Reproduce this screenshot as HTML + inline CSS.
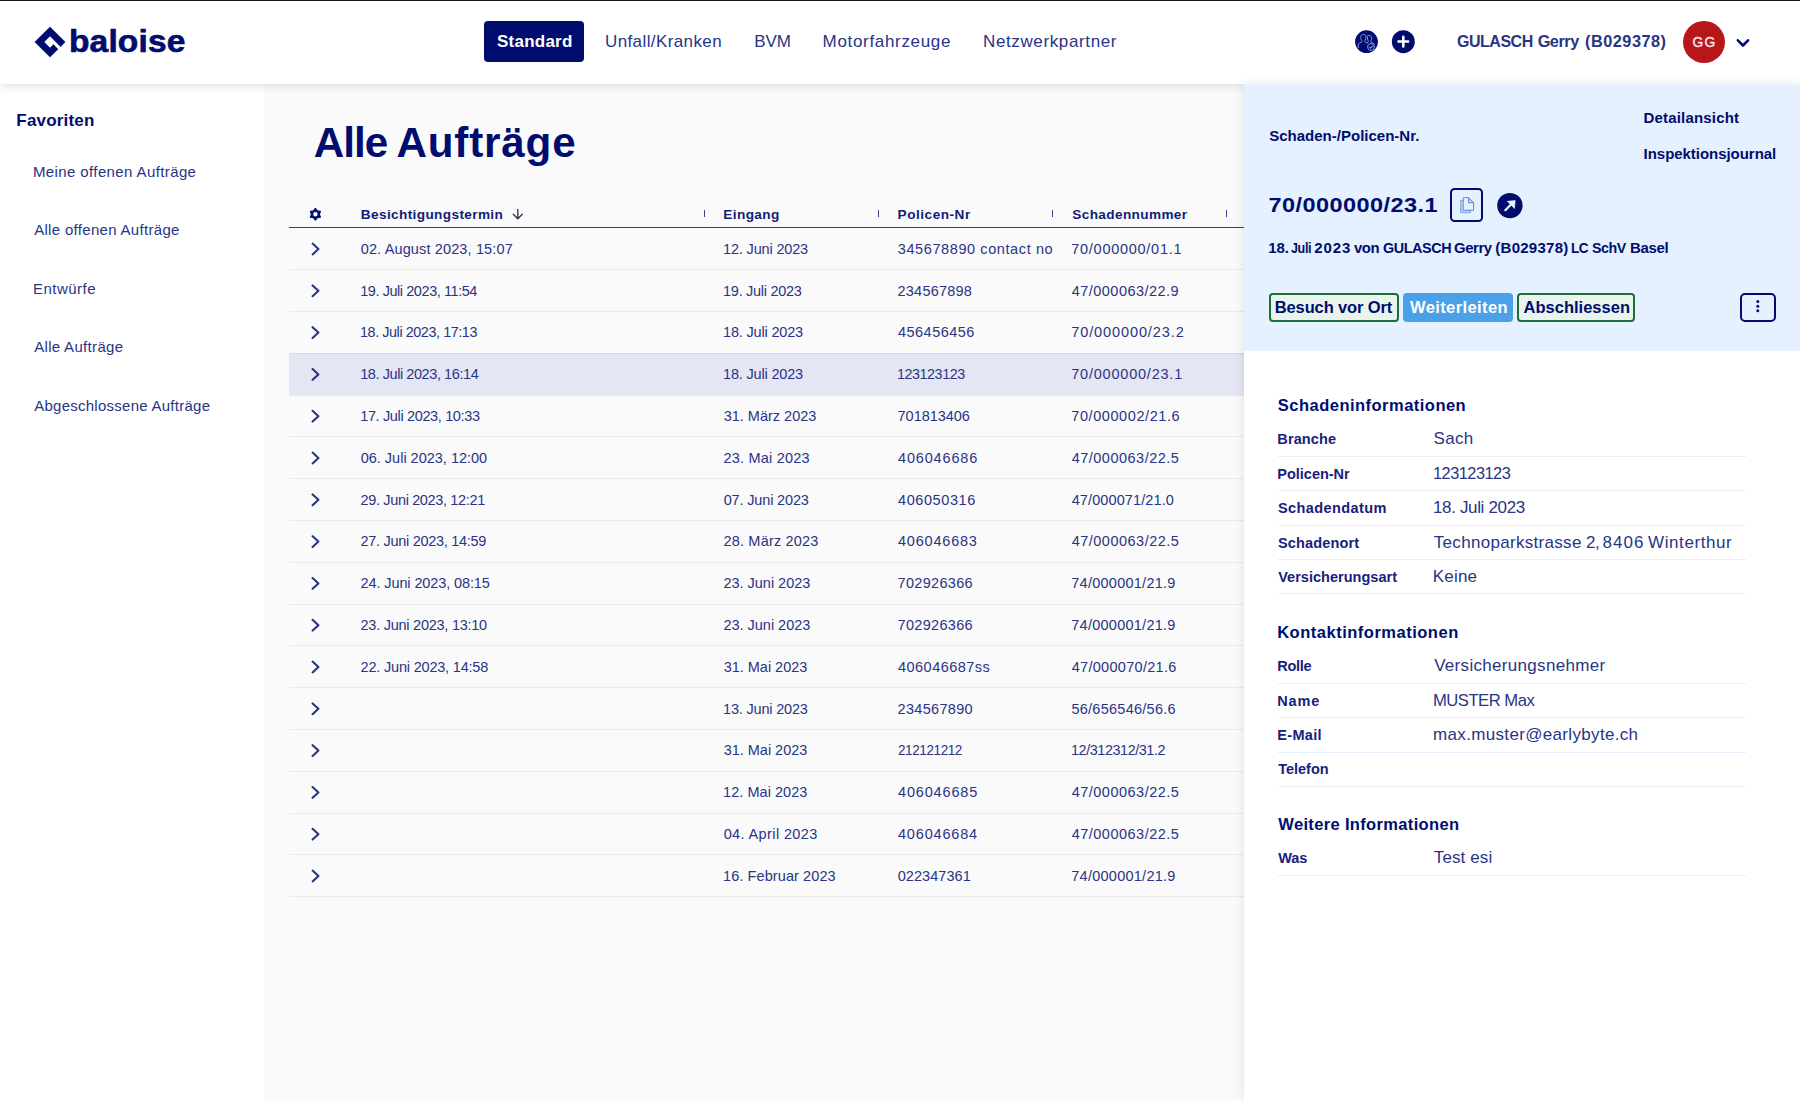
<!DOCTYPE html>
<html lang="de">
<head>
<meta charset="utf-8">
<title>Alle Aufträge</title>
<style>
*{box-sizing:border-box;margin:0;padding:0}
html,body{width:1800px;height:1100px;overflow:hidden;background:#fafafa}
body{font-family:"Liberation Sans",sans-serif;color:#293485;position:relative}
.a{position:absolute;display:block}
.t{position:absolute;white-space:pre;transform-origin:0 50%}
.g{position:absolute;left:0;top:0;width:0;height:0;font-size:0}
.rl{position:absolute;left:289px;width:955px;height:1px;background:rgba(0,0,30,.062);z-index:2}
.pl{position:absolute;left:1278px;width:468px;height:1px;background:#e6eefb;z-index:24}
.hd{position:absolute;top:210px;width:1px;height:7.4px;background:#3a4590;z-index:3}
</style>
</head>
<body>
<div class="a" style="left:0;top:0;width:1800px;height:1.1px;background:#161616;z-index:60"></div>
<header>
<div class="a" id="header" style="left:0;top:0;width:1800px;height:83.6px;background:#fff;box-shadow:0 2px 9px rgba(0,10,60,.12);z-index:20"></div>

<svg class="a" style="left:30px;top:22px;z-index:30" width="40" height="40" viewBox="30 22 40 40"><path fill="#000d6e" stroke="#000d6e" stroke-width="0.5" stroke-linejoin="round" d="M50 26.9 L65.2 42 L60.6 46.7 L50 36.1 L44.1 42 L50 47.9 L53.4 44.6 L58 49.2 L50 57.1 L34.8 42 Z"/></svg>
<div class="a" style="left:484.4px;top:20.8px;width:99.8px;height:41.4px;border-radius:4px;background:#000d6e;z-index:25"></div>
<svg class="a" style="left:1350px;top:26px;z-index:30" width="70" height="32" viewBox="1350 26 70 32"><circle cx="1366.500" cy="41.7" r="11.4" fill="#000d6e"/><circle cx="1403.3" cy="41.7" r="11.500" fill="#000d6e"/><g fill="none" stroke="#8a94e0" stroke-width="1" stroke-linecap="round" stroke-linejoin="round"><path d="M1358.2 47.9 V44.6 C1358.2 43.4 1359.6 42.9 1361.2 42.3 C1362.1 41.9 1362 41 1361.5 40.2 C1360.700 39 1360.600 37.6 1360.800 36.6 C1361.100 35.1 1362.2 34.4 1363.4 34.4 C1364.600 34.4 1365.700 35.1 1365.9 36.6 C1366.100 37.8 1365.9 39.1 1365.2 40.2 C1364.700 41 1364.700 41.8 1365.600 42.2 L1367.4 42.9"/><path d="M1366.600 36.4 C1367 35.7 1368 35.4 1369.2 35.4 C1370.600 35.4 1371.600 36.2 1371.700 37.6 C1371.800 38.8 1371.500 39.9 1370.9 40.7 C1370.500 41.3 1370.600 41.9 1371.4 42.2 C1372.800 42.7 1373.800 43.2 1374.2 44.4"/><path d="M1367.300 37.2 C1367.2 38.5 1367.500 39.8 1368.2 40.8 C1368.600 41.5 1368.4 42 1367.600 42.4"/><circle cx="1371" cy="46.9" r="3.500" fill="#000d6e"/><path d="M1369.4 47.1 l1.100 1 l2.2-2.300" stroke-width="1.200"/></g><path d="M1398.5 41.6 h9.6 M1403.3 36.8 v9.6" stroke="#fff" stroke-width="2.500" stroke-linecap="round"/></svg>
<div class="a" style="left:1683px;top:20.7px;width:42px;height:42px;border-radius:50%;background:#b8171a;z-index:25"></div>
<svg class="a" style="left:1730px;top:32px;z-index:30" width="26" height="22" viewBox="1730 32 26 22"><path d="M1737.9 40.3 L1743 45.5 L1748.1 40.3" fill="none" stroke="#000d6e" stroke-width="2.600" stroke-linecap="round" stroke-linejoin="round"/></svg>
<div class="t" style="left:68.99px;top:19.50px;font-size:33.51px;line-height:42px;color:#000d6e;z-index:30;font-weight:bold;letter-spacing:0.153px;transform:scale(1.0000,0.9400);transform-origin:0 32.50px;-webkit-text-stroke:0.7px #000d6e;">baloise</div>
<div class="t" style="left:497.01px;top:31.00px;font-size:17.00px;line-height:21px;color:#ffffff;z-index:30;font-weight:bold;letter-spacing:0.232px;">Standard</div>
<div class="t" style="left:604.99px;top:31.00px;font-size:17.00px;line-height:21px;color:#293485;z-index:30;letter-spacing:0.392px;">Unfall/Kranken</div>
<div class="t" style="left:754.21px;top:31.00px;font-size:17.00px;line-height:21px;color:#293485;z-index:30;letter-spacing:-0.127px;">BVM</div>
<div class="t" style="left:822.61px;top:31.00px;font-size:17.00px;line-height:21px;color:#293485;z-index:30;letter-spacing:0.675px;">Motorfahrzeuge</div>
<div class="t" style="left:983.01px;top:31.00px;font-size:17.00px;line-height:21px;color:#293485;z-index:30;letter-spacing:0.626px;">Netzwerkpartner</div>
<div class="g"><span class="t" style="left:1457.34px;top:30.90px;font-size:16.30px;line-height:20px;color:#293485;z-index:30;font-weight:bold;letter-spacing:-0.489px;transform:scaleX(0.9829);">GULASCH</span> <span class="t" style="left:1537.63px;top:30.90px;font-size:16.30px;line-height:20px;color:#293485;z-index:30;font-weight:bold;letter-spacing:-0.449px;">Gerry</span> <span class="t" style="left:1584.99px;top:30.90px;font-size:16.30px;line-height:20px;color:#293485;z-index:30;font-weight:bold;letter-spacing:0.511px;">(B029378)</span></div>
<div class="t" style="left:1692.61px;top:33.90px;font-size:13.80px;line-height:17px;color:#ffe6e6;z-index:30;letter-spacing:1.156px;-webkit-text-stroke:0.35px #ffe6e6;">GG</div>
</header>
<aside>
<div class="a" id="sidebar" style="left:0;top:83px;width:264px;height:1017px;background:#fff;z-index:1"></div>
<div class="t" style="left:16.36px;top:110.30px;font-size:17.00px;line-height:21px;color:#000d6e;z-index:30;font-weight:bold;letter-spacing:0.183px;">Favoriten</div>
<div class="t" style="left:32.97px;top:161.70px;font-size:15.00px;line-height:19px;color:#293485;z-index:30;letter-spacing:0.388px;">Meine offenen Aufträge</div>
<div class="t" style="left:34.17px;top:220.15px;font-size:15.00px;line-height:19px;color:#293485;z-index:30;letter-spacing:0.315px;">Alle offenen Aufträge</div>
<div class="t" style="left:32.97px;top:278.60px;font-size:15.00px;line-height:19px;color:#293485;z-index:30;letter-spacing:0.485px;">Entwürfe</div>
<div class="t" style="left:34.17px;top:337.05px;font-size:15.00px;line-height:19px;color:#293485;z-index:30;letter-spacing:0.319px;">Alle Aufträge</div>
<div class="t" style="left:34.17px;top:395.50px;font-size:15.00px;line-height:19px;color:#293485;z-index:30;letter-spacing:0.262px;">Abgeschlossene Aufträge</div>
</aside>
<main>
<svg class="a" style="left:305px;top:204px;z-index:3" width="22" height="22" viewBox="305 204 22 22"><path fill="#000d6e" stroke="#000d6e" stroke-width="1.200" stroke-linejoin="round" fill-rule="evenodd" d="
M315.40 208.50 L317.35 210.92 L320.42 211.40 L319.30 214.30 L320.42 217.20 L317.35 217.68 L315.40 220.10 L313.45 217.68 L310.38 217.20 L311.50 214.30 L310.38 211.40 L313.45 210.92 Z M312.60 214.30 a2.8 2.8 0 1 0 5.6 0 a2.8 2.8 0 1 0 -5.6 0 Z"/></svg>
<svg class="a" style="left:508px;top:206px;z-index:3" width="20" height="18" viewBox="508 206 20 18"><path d="M517.800 209.500 V218.300 M513.300 214.200 L517.800 218.700 L522.300 214.200" fill="none" stroke="#2d2f45" stroke-width="1.300" stroke-linecap="round" stroke-linejoin="round"/></svg>
<div class="a" style="left:289px;top:226.7px;width:955px;height:1.1px;background:#323c8a;z-index:3"></div>
<div class="hd" style="left:703.8px"></div>
<div class="hd" style="left:877.8px"></div>
<div class="hd" style="left:1052.0px"></div>
<div class="hd" style="left:1226.2px"></div>
<div class="a" style="left:289px;top:352.60px;width:955px;height:42.10px;background:#e5e6f3;z-index:1"></div>
<div class="rl" style="top:269.10px"></div>
<div class="rl" style="top:310.90px"></div>
<div class="rl" style="top:352.70px"></div>
<div class="rl" style="top:394.50px"></div>
<div class="rl" style="top:436.30px"></div>
<div class="rl" style="top:478.10px"></div>
<div class="rl" style="top:519.90px"></div>
<div class="rl" style="top:561.70px"></div>
<div class="rl" style="top:603.50px"></div>
<div class="rl" style="top:645.30px"></div>
<div class="rl" style="top:687.10px"></div>
<div class="rl" style="top:728.90px"></div>
<div class="rl" style="top:770.70px"></div>
<div class="rl" style="top:812.50px"></div>
<div class="rl" style="top:854.30px"></div>
<div class="rl" style="top:896.10px"></div>
<svg class="a" style="left:300px;top:228px;z-index:3" width="30" height="680" viewBox="300 228 30 680"><path d="M312.600 243.60 L318.400 249.00 L312.600 254.40 M312.600 285.40 L318.400 290.80 L312.600 296.20 M312.600 327.20 L318.400 332.60 L312.600 338.00 M312.600 369.00 L318.400 374.40 L312.600 379.80 M312.600 410.80 L318.400 416.20 L312.600 421.60 M312.600 452.60 L318.400 458.00 L312.600 463.40 M312.600 494.40 L318.400 499.80 L312.600 505.20 M312.600 536.20 L318.400 541.60 L312.600 547.00 M312.600 578.00 L318.400 583.40 L312.600 588.80 M312.600 619.80 L318.400 625.20 L312.600 630.60 M312.600 661.60 L318.400 667.00 L312.600 672.40 M312.600 703.40 L318.400 708.80 L312.600 714.20 M312.600 745.20 L318.400 750.60 L312.600 756.00 M312.600 787.00 L318.400 792.40 L312.600 797.80 M312.600 828.80 L318.400 834.20 L312.600 839.60 M312.600 870.60 L318.400 876.00 L312.600 881.40" fill="none" stroke="#293485" stroke-width="2.100" stroke-linecap="round" stroke-linejoin="round"/></svg>
<div class="g"><span class="t" style="left:313.65px;top:115.70px;font-size:42.20px;line-height:53px;color:#000d6e;z-index:30;font-weight:bold;letter-spacing:-0.961px;">Alle</span> <span class="t" style="left:396.45px;top:115.70px;font-size:42.20px;line-height:53px;color:#000d6e;z-index:30;font-weight:bold;letter-spacing:0.820px;">Aufträge</span></div>
<div class="t" style="left:360.84px;top:206.30px;font-size:13.60px;line-height:17px;color:#111c78;z-index:30;font-weight:bold;letter-spacing:0.378px;">Besichtigungstermin</div>
<div class="t" style="left:723.29px;top:206.30px;font-size:13.60px;line-height:17px;color:#111c78;z-index:30;font-weight:bold;letter-spacing:0.399px;">Eingang</div>
<div class="t" style="left:897.59px;top:206.30px;font-size:13.60px;line-height:17px;color:#111c78;z-index:30;font-weight:bold;letter-spacing:0.515px;">Policen-Nr</div>
<div class="t" style="left:1072.31px;top:206.30px;font-size:13.60px;line-height:17px;color:#111c78;z-index:30;font-weight:bold;letter-spacing:0.375px;">Schadennummer</div>
<div class="t" style="left:360.73px;top:239.80px;font-size:14.50px;line-height:18px;color:#293485;z-index:30;letter-spacing:0.135px;">02. August 2023, 15:07</div>
<div class="t" style="left:723.10px;top:239.80px;font-size:14.50px;line-height:18px;color:#293485;z-index:30;letter-spacing:-0.170px;">12. Juni 2023</div>
<div class="t" style="left:897.75px;top:239.80px;font-size:14.50px;line-height:18px;color:#293485;z-index:30;letter-spacing:0.597px;">345678890 contact no</div>
<div class="t" style="left:1071.26px;top:239.80px;font-size:14.50px;line-height:18px;color:#293485;z-index:30;letter-spacing:0.727px;">70/000000/01.1</div>
<div class="t" style="left:360.20px;top:281.60px;font-size:14.50px;line-height:18px;color:#293485;z-index:30;letter-spacing:-0.435px;">19. Juli 2023, 11:54</div>
<div class="t" style="left:723.10px;top:281.60px;font-size:14.50px;line-height:18px;color:#293485;z-index:30;letter-spacing:-0.291px;">19. Juli 2023</div>
<div class="t" style="left:897.57px;top:281.60px;font-size:14.50px;line-height:18px;color:#293485;z-index:30;letter-spacing:0.210px;">234567898</div>
<div class="t" style="left:1071.67px;top:281.60px;font-size:14.50px;line-height:18px;color:#293485;z-index:30;letter-spacing:0.479px;">47/000063/22.9</div>
<div class="t" style="left:360.20px;top:323.40px;font-size:14.50px;line-height:18px;color:#293485;z-index:30;letter-spacing:-0.435px;transform:scaleX(0.9925);">18. Juli 2023, 17:13</div>
<div class="t" style="left:723.10px;top:323.40px;font-size:14.50px;line-height:18px;color:#293485;z-index:30;letter-spacing:-0.183px;">18. Juli 2023</div>
<div class="t" style="left:897.97px;top:323.40px;font-size:14.50px;line-height:18px;color:#293485;z-index:30;letter-spacing:0.486px;">456456456</div>
<div class="t" style="left:1071.26px;top:323.40px;font-size:14.50px;line-height:18px;color:#293485;z-index:30;letter-spacing:0.898px;">70/000000/23.2</div>
<div class="t" style="left:360.20px;top:365.20px;font-size:14.50px;line-height:18px;color:#293485;z-index:30;letter-spacing:-0.424px;">18. Juli 2023, 16:14</div>
<div class="t" style="left:723.10px;top:365.20px;font-size:14.50px;line-height:18px;color:#293485;z-index:30;letter-spacing:-0.183px;">18. Juli 2023</div>
<div class="t" style="left:897.21px;top:365.20px;font-size:14.50px;line-height:18px;color:#293485;z-index:30;letter-spacing:-0.435px;transform:scaleX(0.9858);">123123123</div>
<div class="t" style="left:1071.26px;top:365.20px;font-size:14.50px;line-height:18px;color:#293485;z-index:30;letter-spacing:0.781px;">70/000000/23.1</div>
<div class="t" style="left:360.20px;top:407.00px;font-size:14.50px;line-height:18px;color:#293485;z-index:30;letter-spacing:-0.355px;">17. Juli 2023, 10:33</div>
<div class="t" style="left:723.65px;top:407.00px;font-size:14.50px;line-height:18px;color:#293485;z-index:30;">31. März 2023</div>
<div class="t" style="left:897.56px;top:407.00px;font-size:14.50px;line-height:18px;color:#293485;z-index:30;letter-spacing:-0.025px;">701813406</div>
<div class="t" style="left:1071.26px;top:407.00px;font-size:14.50px;line-height:18px;color:#293485;z-index:30;letter-spacing:0.583px;">70/000002/21.6</div>
<div class="t" style="left:360.73px;top:448.80px;font-size:14.50px;line-height:18px;color:#293485;z-index:30;letter-spacing:-0.008px;">06. Juli 2023, 12:00</div>
<div class="t" style="left:723.47px;top:448.80px;font-size:14.50px;line-height:18px;color:#293485;z-index:30;letter-spacing:0.211px;">23. Mai 2023</div>
<div class="t" style="left:897.97px;top:448.80px;font-size:14.50px;line-height:18px;color:#293485;z-index:30;letter-spacing:0.849px;">406046686</div>
<div class="t" style="left:1071.67px;top:448.80px;font-size:14.50px;line-height:18px;color:#293485;z-index:30;letter-spacing:0.496px;">47/000063/22.5</div>
<div class="t" style="left:360.57px;top:490.60px;font-size:14.50px;line-height:18px;color:#293485;z-index:30;letter-spacing:-0.357px;">29. Juni 2023, 12:21</div>
<div class="t" style="left:723.63px;top:490.60px;font-size:14.50px;line-height:18px;color:#293485;z-index:30;letter-spacing:-0.148px;">07. Juni 2023</div>
<div class="t" style="left:897.97px;top:490.60px;font-size:14.50px;line-height:18px;color:#293485;z-index:30;letter-spacing:0.599px;">406050316</div>
<div class="t" style="left:1071.67px;top:490.60px;font-size:14.50px;line-height:18px;color:#293485;z-index:30;letter-spacing:0.108px;">47/000071/21.0</div>
<div class="t" style="left:360.57px;top:532.40px;font-size:14.50px;line-height:18px;color:#293485;z-index:30;letter-spacing:-0.300px;">27. Juni 2023, 14:59</div>
<div class="t" style="left:723.47px;top:532.40px;font-size:14.50px;line-height:18px;color:#293485;z-index:30;letter-spacing:0.180px;">28. März 2023</div>
<div class="t" style="left:897.97px;top:532.40px;font-size:14.50px;line-height:18px;color:#293485;z-index:30;letter-spacing:0.799px;">406046683</div>
<div class="t" style="left:1071.67px;top:532.40px;font-size:14.50px;line-height:18px;color:#293485;z-index:30;letter-spacing:0.496px;">47/000063/22.5</div>
<div class="t" style="left:360.57px;top:574.20px;font-size:14.50px;line-height:18px;color:#293485;z-index:30;letter-spacing:-0.110px;">24. Juni 2023, 08:15</div>
<div class="t" style="left:723.47px;top:574.20px;font-size:14.50px;line-height:18px;color:#293485;z-index:30;letter-spacing:-0.018px;">23. Juni 2023</div>
<div class="t" style="left:897.56px;top:574.20px;font-size:14.50px;line-height:18px;color:#293485;z-index:30;letter-spacing:0.313px;">702926366</div>
<div class="t" style="left:1071.26px;top:574.20px;font-size:14.50px;line-height:18px;color:#293485;z-index:30;letter-spacing:0.256px;">74/000001/21.9</div>
<div class="t" style="left:360.57px;top:616.00px;font-size:14.50px;line-height:18px;color:#293485;z-index:30;letter-spacing:-0.254px;">23. Juni 2023, 13:10</div>
<div class="t" style="left:723.47px;top:616.00px;font-size:14.50px;line-height:18px;color:#293485;z-index:30;letter-spacing:-0.018px;">23. Juni 2023</div>
<div class="t" style="left:897.56px;top:616.00px;font-size:14.50px;line-height:18px;color:#293485;z-index:30;letter-spacing:0.313px;">702926366</div>
<div class="t" style="left:1071.26px;top:616.00px;font-size:14.50px;line-height:18px;color:#293485;z-index:30;letter-spacing:0.256px;">74/000001/21.9</div>
<div class="t" style="left:360.57px;top:657.80px;font-size:14.50px;line-height:18px;color:#293485;z-index:30;letter-spacing:-0.193px;">22. Juni 2023, 14:58</div>
<div class="t" style="left:723.65px;top:657.80px;font-size:14.50px;line-height:18px;color:#293485;z-index:30;letter-spacing:-0.014px;">31. Mai 2023</div>
<div class="t" style="left:897.97px;top:657.80px;font-size:14.50px;line-height:18px;color:#293485;z-index:30;letter-spacing:0.478px;">406046687ss</div>
<div class="t" style="left:1071.67px;top:657.80px;font-size:14.50px;line-height:18px;color:#293485;z-index:30;letter-spacing:0.298px;">47/000070/21.6</div>
<div class="t" style="left:723.10px;top:699.60px;font-size:14.50px;line-height:18px;color:#293485;z-index:30;letter-spacing:-0.186px;">13. Juni 2023</div>
<div class="t" style="left:897.57px;top:699.60px;font-size:14.50px;line-height:18px;color:#293485;z-index:30;letter-spacing:0.302px;">234567890</div>
<div class="t" style="left:1071.42px;top:699.60px;font-size:14.50px;line-height:18px;color:#293485;z-index:30;letter-spacing:0.263px;">56/656546/56.6</div>
<div class="t" style="left:723.65px;top:741.40px;font-size:14.50px;line-height:18px;color:#293485;z-index:30;letter-spacing:-0.014px;">31. Mai 2023</div>
<div class="t" style="left:897.62px;top:741.40px;font-size:14.50px;line-height:18px;color:#293485;z-index:30;letter-spacing:-0.435px;transform:scaleX(0.9314);">212121212</div>
<div class="t" style="left:1070.90px;top:741.40px;font-size:14.50px;line-height:18px;color:#293485;z-index:30;letter-spacing:-0.435px;transform:scaleX(0.9935);">12/312312/31.2</div>
<div class="t" style="left:723.10px;top:783.20px;font-size:14.50px;line-height:18px;color:#293485;z-index:30;letter-spacing:0.036px;">12. Mai 2023</div>
<div class="t" style="left:897.97px;top:783.20px;font-size:14.50px;line-height:18px;color:#293485;z-index:30;letter-spacing:0.845px;">406046685</div>
<div class="t" style="left:1071.67px;top:783.20px;font-size:14.50px;line-height:18px;color:#293485;z-index:30;letter-spacing:0.496px;">47/000063/22.5</div>
<div class="t" style="left:723.63px;top:825.00px;font-size:14.50px;line-height:18px;color:#293485;z-index:30;letter-spacing:0.386px;">04. April 2023</div>
<div class="t" style="left:897.97px;top:825.00px;font-size:14.50px;line-height:18px;color:#293485;z-index:30;letter-spacing:0.822px;">406046684</div>
<div class="t" style="left:1071.67px;top:825.00px;font-size:14.50px;line-height:18px;color:#293485;z-index:30;letter-spacing:0.496px;">47/000063/22.5</div>
<div class="t" style="left:723.10px;top:866.80px;font-size:14.50px;line-height:18px;color:#293485;z-index:30;letter-spacing:0.086px;">16. Februar 2023</div>
<div class="t" style="left:897.73px;top:866.80px;font-size:14.50px;line-height:18px;color:#293485;z-index:30;letter-spacing:0.050px;">022347361</div>
<div class="t" style="left:1071.26px;top:866.80px;font-size:14.50px;line-height:18px;color:#293485;z-index:30;letter-spacing:0.256px;">74/000001/21.9</div>
</main>
<section>
<div class="a" id="panel" style="left:1244.2px;top:83.8px;width:556px;height:1017px;background:#fff;z-index:22;box-shadow:0 0 11px rgba(0,0,40,.10)"></div>
<div class="a" id="phead" style="left:1244.2px;top:83.8px;width:556px;height:267.3px;background:#e5f1fe;z-index:23"></div>
<div class="a" style="left:1449.7px;top:188px;width:33.6px;height:33.6px;border:2px solid #000d6e;border-radius:4.500px;z-index:24"></div>
<svg class="a" style="left:1455px;top:194px;z-index:25" width="22" height="22" viewBox="1455 194 22 22"><g stroke-linejoin="round" stroke-width="0.9"><path d="M1460.700 200.400 h9.600 v12.300 h-9.600 Z" fill="#b9d4f8" stroke="#6f9be0"/><path d="M1463.200 197.700 h5.400 l5 5 v7.600 h-10.400 Z" fill="#e5f1fe" stroke="#5a7fc0"/><path d="M1468.600 197.700 v5 h5 Z" fill="#c5dbf8" stroke="#5a7fc0"/></g></svg>
<svg class="a" style="left:1495px;top:190px;z-index:25" width="30" height="30" viewBox="1495 190 30 30"><circle cx="1509.900" cy="205.600" r="12.700" fill="#000d6e"/><path d="M1505.300 210.200 L1511.500 204" fill="none" stroke="#e9f2fe" stroke-width="2.200" stroke-linecap="round"/><path d="M1507.300 201.300 L1515.200 200.600 L1514.500 208.500 Z" fill="#e9f2fe" stroke="#e9f2fe" stroke-width="0.6" stroke-linejoin="round"/></svg>
<div class="a" style="left:1269px;top:292.7px;width:130px;height:29.2px;border:2px solid #1c6e3d;border-radius:4px;background:#e9f5ec;z-index:24"></div>
<div class="a" style="left:1403.4px;top:292.7px;width:109.6px;height:29.2px;border-radius:4px;background:#4ba1e7;z-index:24"></div>
<div class="a" style="left:1517.4px;top:292.7px;width:117.8px;height:29.2px;border:2px solid #1c6e3d;border-radius:4px;background:#e9f5ec;z-index:24"></div>
<div class="a" style="left:1740px;top:292.7px;width:35.8px;height:29.2px;border:2px solid #000d6e;border-radius:5px;z-index:24"></div>
<svg class="a" style="left:1750px;top:298px;z-index:25" width="16" height="18" viewBox="1750 298 16 18"><g fill="#000d6e"><circle cx="1757.800" cy="301.6" r="1.500"/><circle cx="1757.800" cy="306.2" r="1.500"/><circle cx="1757.800" cy="310.8" r="1.500"/></g></svg>
<div class="pl" style="top:455.9px"></div>
<div class="pl" style="top:490.2px"></div>
<div class="pl" style="top:524.5px"></div>
<div class="pl" style="top:558.9px"></div>
<div class="pl" style="top:593.3px"></div>
<div class="pl" style="top:682.9px"></div>
<div class="pl" style="top:717.2px"></div>
<div class="pl" style="top:751.5px"></div>
<div class="pl" style="top:785.8px"></div>
<div class="pl" style="top:874.5px"></div>
<div class="t" style="left:1269.17px;top:126.10px;font-size:15.00px;line-height:19px;color:#000d6e;z-index:30;font-weight:bold;letter-spacing:0.011px;">Schaden-/Policen-Nr.</div>
<div class="t" style="left:1643.60px;top:108.40px;font-size:15.00px;line-height:19px;color:#000d6e;z-index:30;font-weight:bold;letter-spacing:0.168px;">Detailansicht</div>
<div class="t" style="left:1643.60px;top:143.80px;font-size:15.00px;line-height:19px;color:#000d6e;z-index:30;font-weight:bold;letter-spacing:-0.041px;">Inspektionsjournal</div>
<div class="t" style="left:1268.59px;top:189.70px;font-size:23.49px;line-height:29px;color:#000d6e;z-index:30;font-weight:bold;letter-spacing:0.447px;transform:scale(1.0000,0.8600);transform-origin:0 22.50px;">70/000000/23.1</div>
<div class="g"><span class="t" style="left:1268.26px;top:238.00px;font-size:15.00px;line-height:19px;color:#000d6e;z-index:30;font-weight:bold;letter-spacing:-0.041px;">18.</span> <span class="t" style="left:1291.31px;top:238.00px;font-size:15.00px;line-height:19px;color:#000d6e;z-index:30;font-weight:bold;letter-spacing:-0.450px;transform:scaleX(0.8360);">Juli</span> <span class="t" style="left:1314.28px;top:238.00px;font-size:15.00px;line-height:19px;color:#000d6e;z-index:30;font-weight:bold;letter-spacing:0.896px;">2023</span> <span class="t" style="left:1353.94px;top:238.00px;font-size:15.00px;line-height:19px;color:#000d6e;z-index:30;font-weight:bold;letter-spacing:-0.450px;transform:scaleX(0.9886);">von</span> <span class="t" style="left:1382.61px;top:238.00px;font-size:15.00px;line-height:19px;color:#000d6e;z-index:30;font-weight:bold;letter-spacing:-0.450px;transform:scaleX(0.9593);">GULASCH</span> <span class="t" style="left:1454.19px;top:238.00px;font-size:15.00px;line-height:19px;color:#000d6e;z-index:30;font-weight:bold;letter-spacing:-0.450px;transform:scaleX(0.9964);">Gerry</span> <span class="t" style="left:1495.35px;top:238.00px;font-size:15.00px;line-height:19px;color:#000d6e;z-index:30;font-weight:bold;letter-spacing:0.250px;">(B029378)</span> <span class="t" style="left:1570.60px;top:238.00px;font-size:15.00px;line-height:19px;color:#000d6e;z-index:30;font-weight:bold;letter-spacing:-0.450px;transform:scaleX(0.8987);">LC</span> <span class="t" style="left:1592.09px;top:238.00px;font-size:15.00px;line-height:19px;color:#000d6e;z-index:30;font-weight:bold;letter-spacing:-0.450px;transform:scaleX(0.9486);">SchV</span> <span class="t" style="left:1630.00px;top:238.00px;font-size:15.00px;line-height:19px;color:#000d6e;z-index:30;font-weight:bold;letter-spacing:-0.341px;">Basel</span></div>
<div class="t" style="left:1274.80px;top:296.70px;font-size:16.50px;line-height:21px;color:#000d6e;z-index:30;font-weight:bold;letter-spacing:-0.138px;">Besuch vor Ort</div>
<div class="t" style="left:1409.98px;top:296.70px;font-size:16.50px;line-height:21px;color:#ffffff;z-index:30;font-weight:bold;letter-spacing:0.400px;">Weiterleiten</div>
<div class="t" style="left:1523.59px;top:296.70px;font-size:16.50px;line-height:21px;color:#000d6e;z-index:30;font-weight:bold;">Abschliessen</div>
<div class="t" style="left:1277.82px;top:394.70px;font-size:16.50px;line-height:21px;color:#000d6e;z-index:30;font-weight:bold;letter-spacing:0.480px;">Schadeninformationen</div>
<div class="t" style="left:1277.20px;top:621.60px;font-size:16.50px;line-height:21px;color:#000d6e;z-index:30;font-weight:bold;letter-spacing:0.506px;">Kontaktinformationen</div>
<div class="t" style="left:1278.28px;top:813.70px;font-size:16.50px;line-height:21px;color:#000d6e;z-index:30;font-weight:bold;letter-spacing:0.342px;">Weitere Informationen</div>
<div class="t" style="left:1277.33px;top:430.20px;font-size:14.50px;line-height:18px;color:#16217c;z-index:30;font-weight:bold;letter-spacing:0.106px;">Branche</div>
<div class="t" style="left:1433.43px;top:428.20px;font-size:17.00px;line-height:21px;color:#293485;z-index:30;letter-spacing:0.375px;">Sach</div>
<div class="t" style="left:1277.33px;top:464.50px;font-size:14.50px;line-height:18px;color:#16217c;z-index:30;font-weight:bold;letter-spacing:-0.014px;">Policen-Nr</div>
<div class="t" style="left:1432.96px;top:462.50px;font-size:17.00px;line-height:21px;color:#293485;z-index:30;letter-spacing:-0.510px;transform:scaleX(0.9598);">123123123</div>
<div class="t" style="left:1277.88px;top:499.00px;font-size:14.50px;line-height:18px;color:#16217c;z-index:30;font-weight:bold;letter-spacing:0.416px;">Schadendatum</div>
<div class="t" style="left:1432.91px;top:497.00px;font-size:17.00px;line-height:21px;color:#293485;z-index:30;letter-spacing:-0.339px;">18. Juli 2023</div>
<div class="t" style="left:1277.88px;top:533.60px;font-size:14.50px;line-height:18px;color:#16217c;z-index:30;font-weight:bold;letter-spacing:0.159px;">Schadenort</div>
<div class="g"><span class="t" style="left:1433.82px;top:531.60px;font-size:17.00px;line-height:21px;color:#293485;z-index:30;letter-spacing:0.303px;">Technoparkstrasse</span> <span class="t" style="left:1585.95px;top:531.60px;font-size:17.00px;line-height:21px;color:#293485;z-index:30;letter-spacing:-0.305px;">2,</span> <span class="t" style="left:1602.56px;top:531.60px;font-size:17.00px;line-height:21px;color:#293485;z-index:30;letter-spacing:1.053px;">8406</span> <span class="t" style="left:1648.03px;top:531.60px;font-size:17.00px;line-height:21px;color:#293485;z-index:30;letter-spacing:0.593px;">Winterthur</span></div>
<div class="t" style="left:1278.20px;top:568.10px;font-size:14.50px;line-height:18px;color:#16217c;z-index:30;font-weight:bold;letter-spacing:0.026px;">Versicherungsart</div>
<div class="t" style="left:1432.81px;top:566.10px;font-size:17.00px;line-height:21px;color:#293485;z-index:30;letter-spacing:0.191px;">Keine</div>
<div class="t" style="left:1277.33px;top:657.20px;font-size:14.50px;line-height:18px;color:#16217c;z-index:30;font-weight:bold;letter-spacing:-0.322px;">Rolle</div>
<div class="t" style="left:1434.13px;top:655.20px;font-size:17.00px;line-height:21px;color:#293485;z-index:30;letter-spacing:0.310px;">Versicherungsnehmer</div>
<div class="t" style="left:1277.33px;top:691.60px;font-size:14.50px;line-height:18px;color:#16217c;z-index:30;font-weight:bold;letter-spacing:0.822px;">Name</div>
<div class="t" style="left:1432.84px;top:689.60px;font-size:17.00px;line-height:21px;color:#293485;z-index:30;letter-spacing:-0.510px;transform:scaleX(0.9780);">MUSTER Max</div>
<div class="t" style="left:1277.33px;top:726.00px;font-size:14.50px;line-height:18px;color:#16217c;z-index:30;font-weight:bold;letter-spacing:0.319px;">E-Mail</div>
<div class="t" style="left:1433.07px;top:724.00px;font-size:17.00px;line-height:21px;color:#293485;z-index:30;letter-spacing:0.332px;">max.muster@earlybyte.ch</div>
<div class="t" style="left:1278.14px;top:760.40px;font-size:14.50px;line-height:18px;color:#16217c;z-index:30;font-weight:bold;">Telefon</div>
<div class="t" style="left:1278.29px;top:849.30px;font-size:14.50px;line-height:18px;color:#16217c;z-index:30;font-weight:bold;letter-spacing:-0.136px;">Was</div>
<div class="t" style="left:1433.82px;top:847.30px;font-size:17.00px;line-height:21px;color:#293485;z-index:30;letter-spacing:0.112px;">Test esi</div>
</section>
</body>
</html>
